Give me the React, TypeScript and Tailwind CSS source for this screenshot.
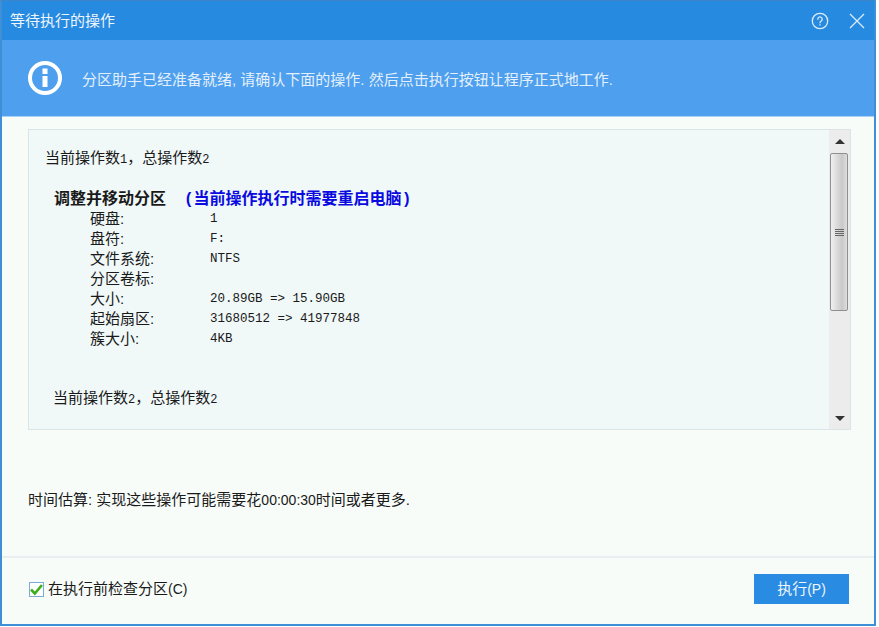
const sans = "font-['Liberation_Sans','Noto_Sans_CJK_SC',sans-serif]";
const mono = "font-['Liberation_Mono','Noto_Sans_CJK_SC',monospace]";

const details = [
  ["硬盘:", "1"],
  ["盘符:", "F:"],
  ["文件系统:", "NTFS"],
  ["分区卷标:", ""],
  ["大小:", "20.89GB => 15.90GB"],
  ["起始扇区:", "31680512 => 41977848"],
  ["簇大小:", "4KB"],
];

function Scrollbar() {
  return (
    <div className="flex w-[21px] shrink-0 flex-col bg-[#ececec]">
      <div className="flex h-[23px] w-full items-center justify-center">
        <div className="h-0 w-0 border-x-[5px] border-b-[5px] border-x-transparent border-b-[#333333]" />
      </div>
      <div className="ml-[1px] flex h-[158px] w-[18px] flex-col items-center justify-center gap-[1px] rounded-[2px] border border-[#8f8f8f] bg-gradient-to-r from-[#f0f0f0] via-[#c9c9c9] via-70% to-[#dedede]">
        <div className="h-[1px] w-[9px] bg-[#666666]" />
        <div className="h-[1px] w-[9px] bg-[#666666]" />
        <div className="h-[1px] w-[9px] bg-[#666666]" />
        <div className="h-[1px] w-[9px] bg-[#666666]" />
      </div>
      <div className="flex-1" />
      <div className="flex h-[22px] w-full items-center justify-center">
        <div className="h-0 w-0 border-x-[5px] border-t-[5px] border-x-transparent border-t-[#333333]" />
      </div>
    </div>
  );
}

export default function App() {
  return (
    <div className={`${sans} flex h-[627px] w-[879px] bg-white`}>
      <div className="flex h-[626px] w-[876px] flex-col border-x-2 border-b-2 border-[#3f8fd6] border-t border-t-[#3d85c6] bg-[#f7fcf9]">
        <div className="flex h-[39px] shrink-0 items-center justify-between bg-[#278ae1] pl-[8px] pr-[9px] text-white">
          <span className="text-[15px] leading-none text-[#eef6fd]">等待执行的操作</span>
          <div className="flex items-center gap-[20px]">
            <svg width="18" height="18" viewBox="0 0 18 18" fill="none" stroke="#dcecfa" strokeWidth="1.3">
              <circle cx="9" cy="9" r="7.7" />
              <path d="M6.8 7.2a2.2 2.2 0 1 1 3.4 1.8c-.8.5-1.2 1-1.2 1.8" strokeLinecap="round" />
              <path d="M9 12.3v1.3" />
            </svg>
            <svg width="16" height="16" viewBox="0 0 16 16" fill="none" stroke="#dcecfa" strokeWidth="1.3">
              <path d="M1 1l14 14M15 1L1 15" />
            </svg>
          </div>
        </div>

        <div className="flex h-[77px] shrink-0 items-center border-b border-b-[#a9d2f5] bg-[#4e9fee] pb-[1px] pl-[25px]">
          <svg width="36" height="36" viewBox="0 0 36 36" className="shrink-0">
            <circle cx="18" cy="18" r="15" fill="none" stroke="#ffffff" strokeWidth="4" />
            <rect x="15.5" y="8.5" width="5" height="5.5" fill="#ffffff" />
            <rect x="15.5" y="16" width="5" height="11" fill="#ffffff" />
          </svg>
          <span className="ml-[19px] mt-[3px] text-[15px] leading-none text-[#e3f0fc]">
            分区助手已经准备就绪, 请确认下面的操作. 然后点击执行按钮让程序正式地工作.
          </span>
        </div>

        <div className="ml-[26px] mt-[12px] flex h-[301px] w-[823px] shrink-0 border border-[#dbe5e8] bg-[#f0f8f8]">
          <div className="min-w-0 flex-1 overflow-hidden text-[15px] text-[#1a1a1a]">
            <div className="ml-[16px] mt-[18px] leading-[20px]">
              当前操作数<span className={`${mono} text-[12px]`}>1</span>，总操作数<span className={`${mono} text-[12px]`}>2</span>
            </div>
            <div className="ml-[25px] mt-[19px] flex h-[20px] text-[16px] leading-[20px] font-bold">
              <span className="w-[130px]">调整并移动分区</span>
              <span className="text-[#0a0ae0]">
                <span className={mono}>(</span>当前操作执行时需要重启电脑<span className={mono}>)</span>
              </span>
            </div>
            <div className="ml-[61px]">
              {details.map(([label, value]) => (
                <div key={label} className="flex h-[20px] items-center leading-[20px]">
                  <span className="w-[120px]">{label}</span>
                  <span className={`${mono} text-[12.5px]`}>{value}</span>
                </div>
              ))}
            </div>
            <div className="ml-[24px] mt-[39px] leading-[20px]">
              当前操作数<span className={`${mono} text-[12px]`}>2</span>，总操作数<span className={`${mono} text-[12px]`}>2</span>
            </div>
          </div>
          <Scrollbar />
        </div>

        <div className="ml-[26px] mt-[60px] h-[20px] text-[15px] leading-[20px] text-[#1a1a1a]">
          时间估算: 实现这些操作可能需要花<span className="text-[14px]">00:00:30</span>时间或者更多.
        </div>

        <div className="mt-[46px] flex flex-1 items-center justify-between border-t-2 border-t-[#e9eef0] pb-[4px] pl-[27px] pr-[25px]">
          <label className="flex items-center gap-[4px] text-[15px] text-[#1a1a1a]">
            <span className="flex h-[15px] w-[15px] items-center justify-center border border-[#7ba9d8] bg-white">
              <svg width="13" height="13" viewBox="0 0 13 13" fill="none" stroke="#3fae1c" strokeWidth="2.6">
                <path d="M1 6.5l3.8 4L12 2" />
              </svg>
            </span>
            <span>
              在执行前检查分区<span className="text-[14px]">(C)</span>
            </span>
          </label>
          <button className="h-[30px] w-[95px] bg-[#2a8be2] text-[15px] text-[#eef6fd]">
            执行<span className="text-[14px]">(P)</span>
          </button>
        </div>
      </div>
    </div>
  );
}
